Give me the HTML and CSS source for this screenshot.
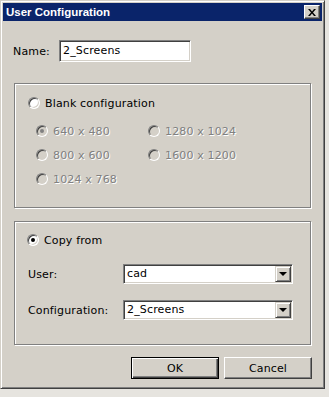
FILE: index.html
```html
<!DOCTYPE html>
<html lang="en">
<head>
  <meta charset="UTF-8" />
  <title>User Configuration</title>
  <link rel="stylesheet" href="styles.css">
</head>
<body>
  <div class="window">
    <div class="titlebar">
      <span class="title">User Configuration</span>
      <span class="close">
        <svg width="8" height="7" viewBox="0 0 8 7">
          <path d="M0 0h2l2 2.5L6 0h2L5 3.5 8 7H6L4 4.5 2 7H0l3-3.5z" fill="#000"/>
        </svg>
      </span>
    </div>

    <div class="content">
      <div class="name-row">
        <label>Name:</label>
        <div class="field">2_Screens</div>
      </div>

      <div class="group blank">
        <div class="radio-row">
          <span class="radio"></span>
          <span>Blank configuration</span>
        </div>
        <div class="res-grid">
          <div class="radio-row disabled"><span class="radio checked"></span><span>640 x 480</span></div>
          <div class="radio-row disabled"><span class="radio"></span><span>1280 x 1024</span></div>
          <div class="radio-row disabled"><span class="radio"></span><span>800 x 600</span></div>
          <div class="radio-row disabled"><span class="radio"></span><span>1600 x 1200</span></div>
          <div class="radio-row disabled"><span class="radio"></span><span>1024 x 768</span></div>
        </div>
      </div>

      <div class="group copy">
        <div class="radio-row">
          <span class="radio checked"></span>
          <span>Copy from</span>
        </div>
        <div class="form-row user-row">
          <label>User:</label>
          <div class="select">cad<span class="drop"></span></div>
        </div>
        <div class="form-row">
          <label>Configuration:</label>
          <div class="select">2_Screens<span class="drop"></span></div>
        </div>
      </div>

      <div class="buttons">
        <button class="btn default">OK</button>
        <button class="btn">Cancel</button>
      </div>
    </div>
  </div>
</body>
</html>
```

FILE: styles.css
```css
* {
  margin: 0;
  padding: 0;
  box-sizing: border-box;
}

body {
  background: #e6e4df;
  font-family: 'DejaVu Sans', Verdana, sans-serif;
  font-size: 11px;
  letter-spacing: 0.15px;
  color: #000;
}

.window {
  width: 325px;
  height: 389px;
  background: #d4d0c8;
  border: 1px solid;
  border-color: #d4d0c8 #404040 #404040 #d4d0c8;
  box-shadow: inset 1px 1px #fff, inset -1px -1px #808080;
  padding: 2px;
}

.titlebar {
  height: 18px;
  background: #0a246a;
  display: flex;
  align-items: center;
  justify-content: space-between;
  padding: 0 2px 0 3px;
}

.title {
  color: #fff;
  font-family: 'Liberation Sans', Arial, sans-serif;
  font-weight: bold;
  font-size: 11.5px;
  letter-spacing: 0;
}

.close {
  width: 16px;
  height: 14px;
  background: #d4d0c8;
  border: 1px solid;
  border-color: #fff #404040 #404040 #fff;
  box-shadow: inset -1px -1px #808080;
  display: flex;
  align-items: center;
  justify-content: center;
}

.content {
  padding: 0 10px 0 11px;
}

/* name */
.name-row {
  display: flex;
  align-items: center;
  margin-top: 19px;
  height: 22px;
}

.name-row label {
  width: 46px;
  margin-left: -1px;
}

.field {
  width: 132px;
  height: 22px;
  background: #fff;
  border: 1px solid;
  border-color: #808080 #fff #fff #808080;
  box-shadow: inset 1px 1px #404040, inset -1px -1px #d4d0c8;
  padding: 0 3px;
  line-height: 20px;
}

/* group boxes */
.group {
  width: 297px;
  border: 1px solid #808080;
  box-shadow: inset 1px 1px #fff, 1px 1px #fff;
}

.group.blank {
  margin-top: 21px;
  height: 125px;
  padding: 12px 0 0 13px;
}

.group.copy {
  margin-top: 13px;
  height: 124px;
  padding: 11px 0 0 12px;
}

.radio-row {
  display: flex;
  align-items: center;
  gap: 5px;
  height: 14px;
}

.radio {
  width: 12px;
  height: 12px;
  border-radius: 50%;
  background: #fff;
  border: 1px solid;
  border-color: #808080 #fff #fff #808080;
  box-shadow: inset 1px 1px #404040, inset -1px -1px #d4d0c8;
  display: flex;
  align-items: center;
  justify-content: center;
  flex: none;
}

.radio.checked::after {
  content: "";
  width: 4px;
  height: 4px;
  border-radius: 50%;
  background: #000;
}

.disabled {
  color: #808080;
  text-shadow: 1px 1px 0 #fff;
}

.disabled .radio {
  background: #d4d0c8;
}

.disabled .radio.checked::after {
  background: #808080;
}

.res-grid {
  display: grid;
  grid-template-columns: 112px 120px;
  row-gap: 10px;
  margin: 14px 0 0 8px;
}

/* copy from rows */
.form-row {
  display: flex;
  align-items: center;
  height: 20px;
  margin-top: 16px;
}

.user-row {
  margin-top: 17px;
}

.form-row label {
  width: 96px;
  padding-left: 1px;
}

.select {
  position: relative;
  width: 170px;
  height: 20px;
  background: #fff;
  border: 1px solid;
  border-color: #808080 #fff #fff #808080;
  box-shadow: inset 1px 1px #404040, inset -1px -1px #d4d0c8;
  padding: 0 3px;
  line-height: 18px;
}

.drop {
  position: absolute;
  top: 1px;
  right: 1px;
  width: 16px;
  height: 16px;
  background: #d4d0c8;
  border: 1px solid;
  border-color: #d4d0c8 #404040 #404040 #d4d0c8;
  box-shadow: inset 1px 1px #fff, inset -1px -1px #808080;
}

.drop::after {
  content: "";
  position: absolute;
  left: 3px;
  top: 5px;
  border-left: 4px solid transparent;
  border-right: 4px solid transparent;
  border-top: 4px solid #000;
}

/* buttons */
.buttons {
  display: flex;
  justify-content: flex-end;
  gap: 5px;
  margin-top: 12px;
}

.btn {
  width: 88px;
  height: 22px;
  background: #d4d0c8;
  font-family: 'DejaVu Sans', Verdana, sans-serif;
  font-size: 11px;
  letter-spacing: 0.15px;
  color: #000;
  border: 1px solid;
  border-color: #fff #404040 #404040 #fff;
  box-shadow: inset -1px -1px #808080;
}

.btn.default {
  border: 1px solid #000;
  box-shadow: inset 1px 1px #fff, inset -1px -1px #404040, inset -2px -2px #808080;
}
```
